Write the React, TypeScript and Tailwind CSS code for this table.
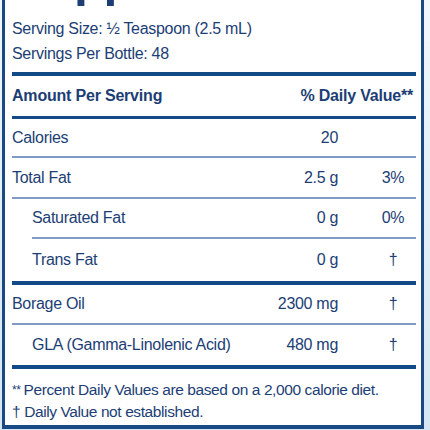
import React from "react";

type Row = {
  label: string;
  amount: string;
  dv?: string;
  indent?: boolean;
  h: string;
  after: "thin" | "thinIndent" | "thick";
};

const rows: Row[] = [
  { label: "Calories", amount: "20", h: "h-[37px]", after: "thin" },
  { label: "Total Fat", amount: "2.5 g", dv: "3%", h: "h-[39px]", after: "thin" },
  { label: "Saturated Fat", amount: "0 g", dv: "0%", indent: true, h: "h-[38px]", after: "thinIndent" },
  { label: "Trans Fat", amount: "0 g", dv: "†", indent: true, h: "h-[42px]", after: "thick" },
  { label: "Borage Oil", amount: "2300 mg", dv: "†", h: "h-[38px]", after: "thin" },
  { label: "GLA (Gamma-Linolenic Acid)", amount: "480 mg", dv: "†", indent: true, h: "h-[40px]", after: "thick" },
];

const Divider = ({ kind }: { kind: Row["after"] }) => {
  if (kind === "thick") return <div className="h-[4px] bg-[#124a88]" />;
  if (kind === "thinIndent") return <div className="ml-[20px] h-[2px] bg-[#7f9ac4]" />;
  return <div className="h-[2px] bg-[#7f9ac4]" />;
};

export default function App() {
  return (
    <div className="w-[430px] h-[430px] overflow-hidden bg-gradient-to-b from-[#f1f7fd] to-[#d6e6f4] font-['Liberation_Sans',Arial,sans-serif] text-[#1c3e74]">
      <div className="ml-[2px] w-[422px] bg-white border-x-[3px] border-b-[4px] border-[#1a4a84] pl-[7px] pr-[5px] pb-[2px]">
        {/* Title, cut off at the top edge */}
        <div className="-mt-[46px] h-[50px] text-[50px] leading-[50px] font-bold tracking-[-1px] whitespace-nowrap">
          Supplement Facts
        </div>

        {/* Serving info */}
        <div className="mt-[12px] h-[25px] flex items-center text-[16px] tracking-[-0.3px]">
          Serving Size: ½ Teaspoon (2.5 mL)
        </div>
        <div className="h-[25px] flex items-center text-[16px] tracking-[-0.3px]">
          Servings Per Bottle: 48
        </div>
        <div className="mt-[6px] h-[4px] bg-[#124a88]" />

        {/* Header */}
        <div className="h-[40px] flex items-center justify-between font-bold text-[16px] tracking-[-0.2px] pr-[3px]">
          <span>Amount Per Serving</span>
          <span>% Daily Value**</span>
        </div>
        <div className="h-[3px] bg-[#124a88]" />

        {/* Nutrient rows */}
        {rows.map((r) => (
          <div key={r.label}>
            <div className={`${r.h} grid grid-cols-[1fr_auto_46px] items-center text-[16px] tracking-[-0.3px]`}>
              <span className={r.indent ? "pl-[20px]" : ""}>{r.label}</span>
              <span className="text-right pr-[32px]">{r.amount}</span>
              <span className="text-center">{r.dv ?? ""}</span>
            </div>
            <Divider kind={r.after} />
          </div>
        ))}

        {/* Footnotes */}
        <div className="pt-[10px] text-[15.5px] tracking-[-0.4px]">
          <div className="h-[22px] flex items-center">
            <span className="text-[12px] mr-[3px]">**</span>Percent Daily Values are based on a 2,000 calorie diet.
          </div>
          <div className="h-[22px] flex items-center">† Daily Value not established.</div>
        </div>
      </div>
    </div>
  );
}
